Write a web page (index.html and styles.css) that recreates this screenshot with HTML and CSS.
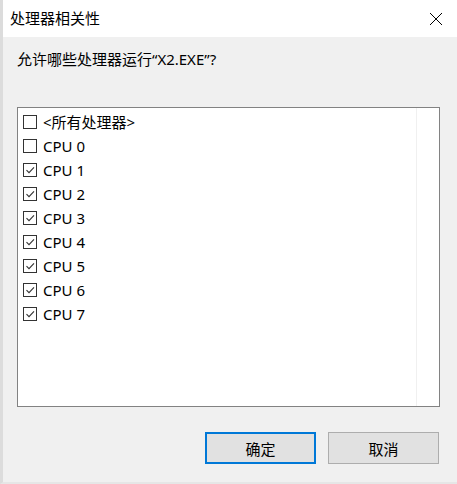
FILE: index.html
```html
<!DOCTYPE html>
<html lang="zh-CN">
<head>
<meta charset="utf-8">
<title>处理器相关性</title>
<link rel="stylesheet" href="styles.css">
</head>
<body>
<div class="window">
  <div class="titlebar">
    <span class="title">处理器相关性</span>
    <span class="close">
      <svg width="14" height="14" viewBox="0 0 14 14"><path d="M1 1L13 13M13 1L1 13" stroke="#000" stroke-width="1" fill="none"/></svg>
    </span>
  </div>
  <div class="content">
    <div class="prompt">允许哪些处理器运行“X2.EXE”?</div>
    <div class="listbox">
      <div class="divider"></div>
      <ul class="items">
        <li class="item"><span class="box"></span><span class="label">&lt;所有处理器&gt;</span></li>
        <li class="item"><span class="box"></span><span class="label">CPU 0</span></li>
        <li class="item"><span class="box checked"><svg width="12" height="12" viewBox="0 0 12 12"><path d="M2.5 6.2L5 8.7L10 3.3" stroke="#333" stroke-width="1.1" fill="none"/></svg></span><span class="label">CPU 1</span></li>
        <li class="item"><span class="box checked"><svg width="12" height="12" viewBox="0 0 12 12"><path d="M2.5 6.2L5 8.7L10 3.3" stroke="#333" stroke-width="1.1" fill="none"/></svg></span><span class="label">CPU 2</span></li>
        <li class="item"><span class="box checked"><svg width="12" height="12" viewBox="0 0 12 12"><path d="M2.5 6.2L5 8.7L10 3.3" stroke="#333" stroke-width="1.1" fill="none"/></svg></span><span class="label">CPU 3</span></li>
        <li class="item"><span class="box checked"><svg width="12" height="12" viewBox="0 0 12 12"><path d="M2.5 6.2L5 8.7L10 3.3" stroke="#333" stroke-width="1.1" fill="none"/></svg></span><span class="label">CPU 4</span></li>
        <li class="item"><span class="box checked"><svg width="12" height="12" viewBox="0 0 12 12"><path d="M2.5 6.2L5 8.7L10 3.3" stroke="#333" stroke-width="1.1" fill="none"/></svg></span><span class="label">CPU 5</span></li>
        <li class="item"><span class="box checked"><svg width="12" height="12" viewBox="0 0 12 12"><path d="M2.5 6.2L5 8.7L10 3.3" stroke="#333" stroke-width="1.1" fill="none"/></svg></span><span class="label">CPU 6</span></li>
        <li class="item"><span class="box checked"><svg width="12" height="12" viewBox="0 0 12 12"><path d="M2.5 6.2L5 8.7L10 3.3" stroke="#333" stroke-width="1.1" fill="none"/></svg></span><span class="label">CPU 7</span></li>
      </ul>
    </div>
    <div class="buttons">
      <button class="btn default">确定</button>
      <button class="btn">取消</button>
    </div>
  </div>
</div>
</body>
</html>
```
FILE: styles.css
```css
html, body {
  margin: 0;
  padding: 0;
  background: #f0f0f0;
}
body {
  width: 457px;
  height: 484px;
  overflow: hidden;
  font-family: "Noto Sans", "Noto Sans CJK SC", sans-serif;
  font-size: 15px;
  color: #000;
}
.window {
  width: 457px;
  height: 484px;
  display: flex;
  flex-direction: column;
  border-left: 3px solid #dcdcdc;
  border-bottom: 2px solid #e6e6e6;
  box-sizing: border-box;
}
.titlebar {
  height: 37px;
  background: #fff;
  display: flex;
  align-items: center;
  justify-content: space-between;
  padding: 0 14px 0 7px;
  flex: none;
}
.title {
  font-size: 15px;
  line-height: 20px;
  margin-top: -1px;
}
.close {
  display: flex;
  width: 14px;
  height: 14px;
}
.content {
  padding: 12px 17px 0 14px;
  display: flex;
  flex-direction: column;
}
.prompt {
  line-height: 20px;
  height: 20px;
}
.listbox {
  position: relative;
  margin-top: 38px;
  height: 300px;
  box-sizing: border-box;
  border: 1px solid #828282;
  background: #fff;
}
.divider {
  position: absolute;
  top: 0;
  bottom: 0;
  left: 398px;
  width: 1px;
  background: #f0f0f0;
}
.items {
  list-style: none;
  margin: 0;
  padding: 2px 0 0 5px;
}
.item {
  height: 24px;
  display: flex;
  align-items: center;
}
.box {
  width: 14px;
  height: 14px;
  box-sizing: border-box;
  border: 1px solid #333;
  background: #fff;
  display: flex;
  align-items: center;
  justify-content: center;
  flex: none;
}
.label {
  margin-left: 6px;
  line-height: 20px;
}
.buttons {
  display: flex;
  justify-content: flex-end;
  gap: 12px;
  margin-top: 25px;
  padding-right: 1px;
}
.btn {
  width: 111px;
  height: 32px;
  box-sizing: border-box;
  background: #e1e1e1;
  border: 1px solid #adadad;
  font-family: "Noto Sans CJK SC", "Noto Sans", sans-serif;
  font-size: 15px;
  color: #000;
  padding: 0;
  margin: 0;
}
.btn.default {
  border: 2px solid #0078d7;
}
```
